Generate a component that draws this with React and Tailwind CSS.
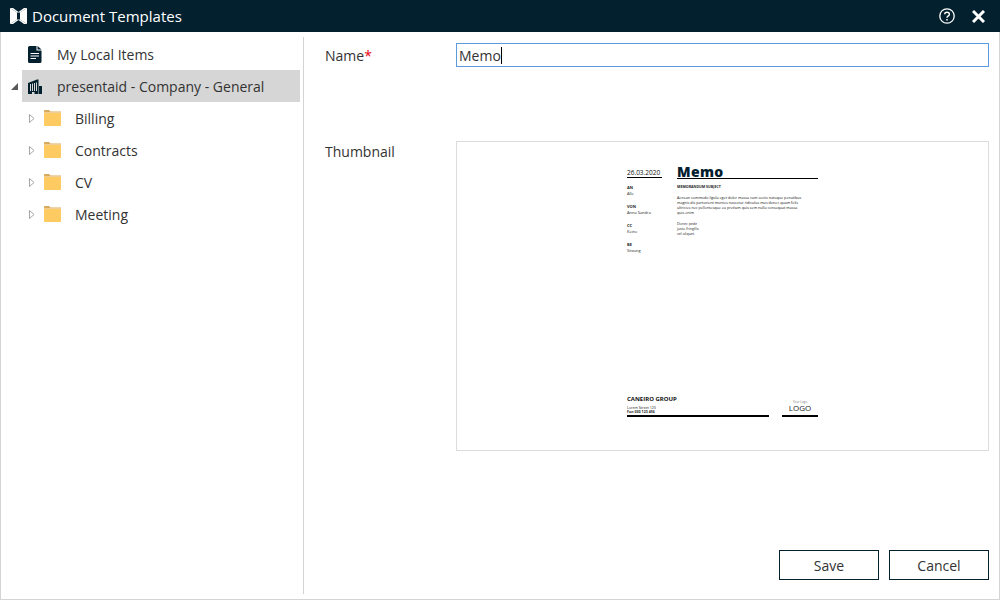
import React from "react";
import { ChevronDown } from "lucide-react";

const font = { fontFamily: '"Open Sans", "Noto Sans", sans-serif' };

const folders = ["Billing", "Contracts", "CV", "Meeting"];

const meta = [
  ["AN", "Alle"],
  ["VON", "Anna Sandra"],
  ["CC", "Keine"],
  ["BE", "Sitzung"],
];

const Logo = () => (
  <svg width="17" height="16" viewBox="0 0 17 16" fill="#fff">
    <path d="M0 0 L7 4.5 V11.5 L0 16 Z" />
    <path d="M17 0 L10 4.5 V11.5 L17 16 Z" />
    <path d="M0 0 H3 L8.5 4 L14 0 H17 L10 4.5 H7 Z" />
    <path d="M0 16 H3 L8.5 12 L14 16 H17 L10 11.5 H7 Z" />
  </svg>
);

const DocIcon = () => (
  <svg width="14" height="17" viewBox="0 0 14 17" fill="#03202f">
    <path d="M1.5 0 H8.5 V4.5 H13.5 V15.5 Q13.5 17 12 17 H1.5 Q0 17 0 15.5 V1.5 Q0 0 1.5 0 Z" />
    <path d="M9.5 0 L13.5 3.5 H9.5 Z" />
    <path d="M2.5 7 H11 V8 H2.5 Z M2.5 9.5 H11 V10.5 H2.5 Z M2.5 12 H8 V13 H2.5 Z" fill="#fff" />
  </svg>
);

const CompanyIcon = () => (
  <svg width="14" height="15" viewBox="0 0 14 15" fill="#03202f">
    <path d="M0 4 L9 0.5 H10.5 V15 H0 Z" />
    <path d="M11 7 H14 V15 H11 Z" />
    <path d="M2 5 H3 V12 H2 Z M4 4.5 H5 V12 H4 Z M6 4 H7 V12 H6 Z M8 3.5 H9 V12 H8 Z M4 13 H6.5 V15 H4 Z" fill="#d6d6d6" />
  </svg>
);

const FolderIcon = () => (
  <svg width="17" height="16" viewBox="0 0 17 16">
    <path d="M0 1 Q0 0 1 0 H5 L6.5 1.5 H17 V3 H0 Z" fill="#d9a95c" />
    <path d="M0 2.5 H17 V3 H0 Z" fill="#fff3d6" />
    <path d="M0 3 H17 V15.5 Q17 16 16.5 16 H0.5 Q0 16 0 15.5 Z" fill="#fecb62" />
  </svg>
);

const CollapsedArrow = () => (
  <svg width="6" height="9" viewBox="0 0 6 9" fill="#fff" stroke="#a6a6a6" strokeWidth="1">
    <path d="M0.5 0.5 L5 4.5 L0.5 8.5 Z" />
  </svg>
);

const ExpandedArrow = () => (
  <svg width="7" height="7" viewBox="0 0 7 7" fill="#595959">
    <path d="M7 0 V7 H0 Z" />
  </svg>
);

const HelpIcon = () => (
  <svg width="16" height="16" viewBox="0 0 16 16" fill="none" stroke="#fff">
    <circle cx="8" cy="8" r="7.2" strokeWidth="1.3" />
    <path d="M5.7 6.2 C5.7 3.6 10.4 3.6 10.4 6.2 C10.4 7.9 8 7.9 8 9.8" strokeWidth="1.4" />
    <path d="M8 11 V12.6" strokeWidth="1.5" />
  </svg>
);

const CloseIcon = () => (
  <svg width="13" height="13" viewBox="0 0 13 13" stroke="#fff" strokeWidth="3">
    <path d="M1 1 L12 12 M12 1 L1 12" />
  </svg>
);

const TreeRow = ({ icon, label, selected, arrow, className }) => (
  <div className="flex h-8 items-center">
    <div className="flex w-[21px] shrink-0 items-center justify-end pr-1">{arrow}</div>
    <div className={`flex h-8 flex-1 items-center ${selected ? "bg-[#d6d6d6]" : ""} ${className || ""}`}>
      {icon}
      <span className="text-[14px] text-[#333]">{label}</span>
    </div>
  </div>
);

const Thumbnail = () => (
  <div className="mt-[74px] flex h-[310px] flex-1 justify-center border border-[#dcdcdc] bg-white">
    <div className="flex w-[191px] flex-col justify-between pt-[23px] pb-[33px]">
      <div className="flex gap-[15px]">
        <div className="w-[35px]">
          <div className="flex h-[13px] items-end border-b border-black pb-[1px] text-[6.5px] leading-none whitespace-nowrap text-[#111]">
            26.03.2020
          </div>
          <div className="mt-[7px] flex flex-col gap-[7px]">
            {meta.map(([key, value]) => (
              <div key={key} className="text-[4px] leading-[6px] text-[#222]">
                <div className="font-bold">{key}</div>
                <div className="whitespace-nowrap">{value}</div>
              </div>
            ))}
          </div>
        </div>
        <div className="flex-1">
          <div className="border-b border-black text-[14px] leading-[13px] font-extrabold tracking-wide text-[#03202f]">
            Memo
          </div>
          <div className="mt-[5px] text-[3.6px] leading-[5px] font-bold text-[#222]">MEMORANDUM SUBJECT</div>
          <div className="mt-[6px] w-[125px] text-[3.7px] leading-[5px] text-[#111]">
            Aenean commodo ligula eget dolor massa cum sociis natoque penatibus magnis dis parturient montes nascetur
            ridiculus mus donec quam felis ultricies nec pellentesque eu pretium quis sem nulla consequat massa quis enim
          </div>
          <div className="mt-[6px] text-[3.6px] leading-[5px] text-[#222]">
            <div>Donec pede</div>
            <div>justo fringilla</div>
            <div>vel aliquet</div>
          </div>
        </div>
      </div>
      <div className="flex items-end justify-between">
        <div className="w-[142px] border-b-2 border-black pb-[1px]">
          <div className="text-[6px] leading-[8px] font-bold whitespace-nowrap text-[#111]">CANEIRO GROUP</div>
          <div className="mt-[3px] text-[3.6px] leading-[4px] text-[#222]">
            <div>Lorem Street 123</div>
            <div className="font-bold">Fon 030 123 456</div>
          </div>
        </div>
        <div className="w-[36px] border-b-2 border-black pb-[3px] text-center">
          <div className="text-[3px] leading-[3px] text-[#777]">Your Logo</div>
          <div className="text-[8px] leading-[8px] text-[#222]">LOGO</div>
        </div>
      </div>
    </div>
  </div>
);

export default function App() {
  return (
    <div className="flex h-[600px] w-[1000px] flex-col overflow-hidden bg-white" style={font}>
      <header className="flex h-8 shrink-0 items-center bg-[#03202f] pr-[15px] pl-[10px] text-white">
        <Logo />
        <h1 className="ml-[5px] text-[15px] font-normal">Document Templates</h1>
        <div className="ml-auto flex items-center gap-[17px]">
          <HelpIcon />
          <CloseIcon />
        </div>
      </header>

      <div className="flex min-h-0 flex-1 border-x border-b border-[#d4d4d4]">
        <aside className="my-[5px] w-[303px] shrink-0 border-r border-[#d4d4d4] pt-[1px] pr-[3px]">
          <TreeRow icon={<span className="mr-[15px] ml-[6px] flex"><DocIcon /></span>} label="My Local Items" />
          <TreeRow
            selected
            arrow={<ExpandedArrow />}
            icon={<span className="mr-[15px] ml-[6px] flex"><CompanyIcon /></span>}
            label="presentaid - Company - General"
          />
          {folders.map((name) => (
            <div key={name} className="flex h-8 items-center pl-[28px]">
              <CollapsedArrow />
              <span className="mr-[14px] ml-[9px] flex"><FolderIcon /></span>
              <span className="text-[14px] text-[#333]">{name}</span>
            </div>
          ))}
        </aside>

        <main className="flex flex-1 flex-col pt-[11px] pr-[10px] pl-[21px]">
          <div className="flex items-start">
            <label className="w-[131px] shrink-0 pt-[3px] text-[14px] leading-[20px] text-[#333]">
              Name<span className="text-red-600">*</span>
            </label>
            <div className="flex h-6 flex-1 items-center border border-[#5b9bdc] pl-[2px] text-[14px] text-[#333]">
              Memo
              <span className="h-[17px] w-px bg-black" />
            </div>
          </div>

          <div className="flex items-start">
            <label className="mt-[75px] w-[131px] shrink-0 text-[14px] leading-[20px] text-[#333]">Thumbnail</label>
            <Thumbnail />
          </div>

          <div className="mt-auto mb-[19px] flex justify-end gap-[10px]">
            <button className="h-[30px] w-[100px] border border-[#03202f] text-[14px] text-[#333]">Save</button>
            <button className="h-[30px] w-[100px] border border-[#03202f] text-[14px] text-[#333]">Cancel</button>
          </div>
        </main>
      </div>
    </div>
  );
}
